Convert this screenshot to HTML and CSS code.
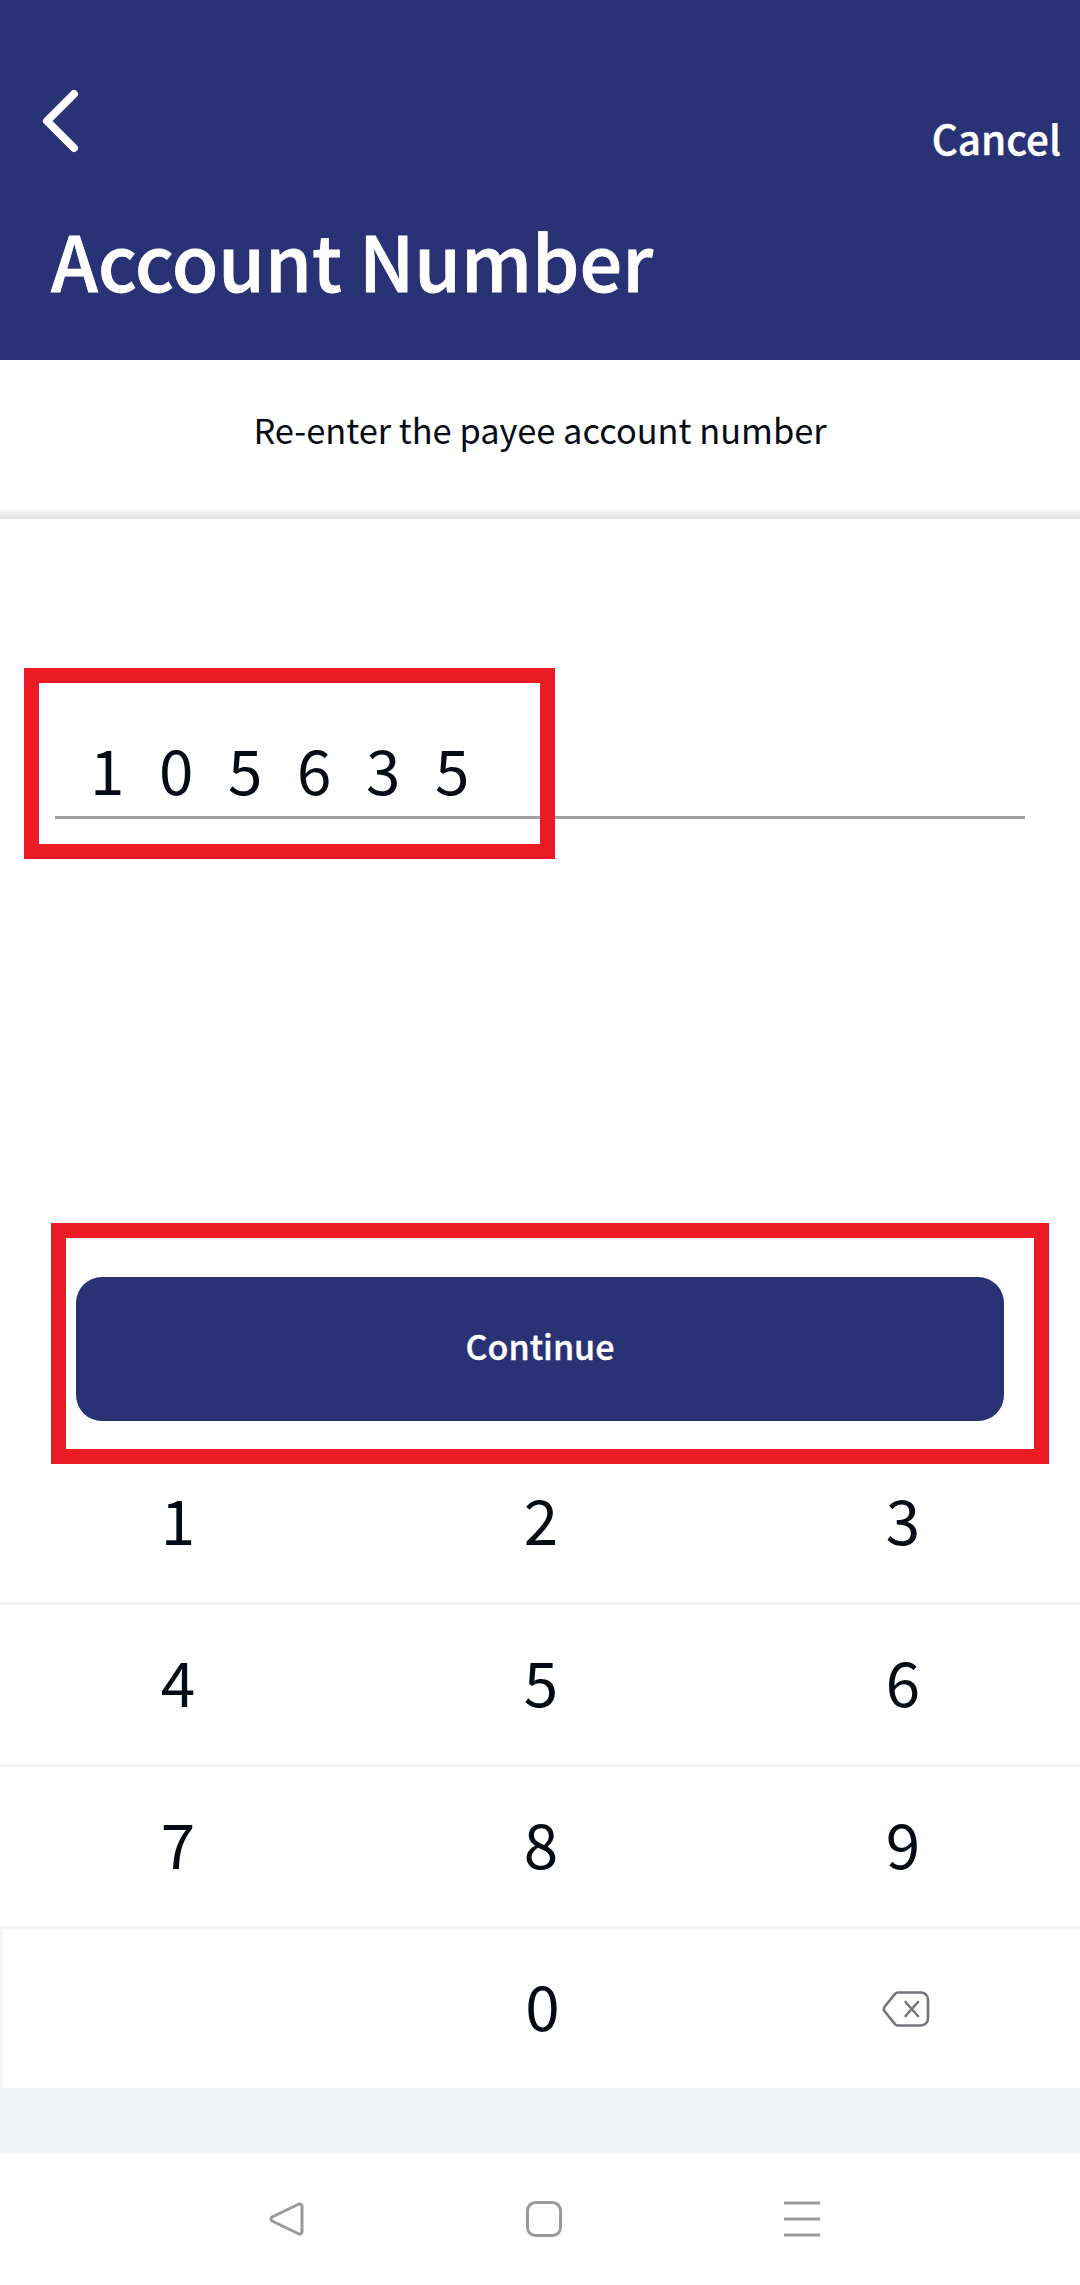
FILE: index.html
```html
<!DOCTYPE html>
<html lang="en">
<head>
    <meta charset="UTF-8">
    <meta name="viewport" content="width=device-width, initial-scale=1.0">
    <title>Account Number</title>
    <link rel="stylesheet" href="styles.css">
</head>

<body>
<div class="page">
    <header class="app-header">
        <div class="top-bar">
            <svg class="back-icon" width="40" height="64" viewBox="0 0 40 64">
                <path d="M32 4 L5 31 L32 58" fill="none" stroke="#fff" stroke-width="8" stroke-linecap="round" stroke-linejoin="round"/>
            </svg>
            <div class="cancel">Cancel</div>
        </div>
        <div class="title">Account Number</div>
    </header>

    <div class="prompt">Re-enter the payee account number</div>
    <div class="prompt-shadow"></div>

    <div class="field">
        <div class="field-value">105635</div>
        <div class="mark mark-field"></div>
    </div>

    <div class="action">
        <button class="continue" type="button">Continue</button>
        <div class="mark mark-action"></div>
    </div>

    <div class="keypad">
        <div class="key-row">
            <div class="key">1</div>
            <div class="key">2</div>
            <div class="key">3</div>
        </div>
        <div class="key-row">
            <div class="key">4</div>
            <div class="key">5</div>
            <div class="key">6</div>
        </div>
        <div class="key-row">
            <div class="key">7</div>
            <div class="key">8</div>
            <div class="key">9</div>
        </div>
        <div class="key-row key-row-last">
            <div class="key key-blank"></div>
            <div class="key key-zero">0</div>
            <div class="key">
                <svg class="backspace" width="48" height="38" viewBox="0 0 48 38">
                    <path d="M16 2.5 H39 A7 7 0 0 1 46 9.5 V28.5 A7 7 0 0 1 39 35.5 H16 A4 4 0 0 1 13.2 34.3 L2.8 21.5 A4 4 0 0 1 2.8 16.5 L13.2 3.7 A4 4 0 0 1 16 2.5 Z" fill="none" stroke="#73757e" stroke-width="2.6"/>
                    <path d="M23.5 12 L36 26 M36 12 L23.5 26" fill="none" stroke="#73757e" stroke-width="2.6" stroke-linecap="round"/>
                </svg>
            </div>
        </div>
    </div>

    <div class="keypad-foot"></div>

    <nav class="nav-bar">
        <svg width="36" height="36" viewBox="0 0 36 36">
            <path d="M31 3 A2.5 2.5 0 0 1 34 5 V31 A2.5 2.5 0 0 1 31 33 L4 20 A2.5 2.5 0 0 1 4 16 Z" fill="none" stroke="#999" stroke-width="3" stroke-linejoin="round"/>
        </svg>
        <svg width="36" height="36" viewBox="0 0 36 36">
            <rect x="1.5" y="1.5" width="33" height="33" rx="8" fill="none" stroke="#999" stroke-width="3"/>
        </svg>
        <svg width="36" height="36" viewBox="0 0 36 36">
            <path d="M0 2 H36 M0 18 H36 M0 34 H36" fill="none" stroke="#999" stroke-width="3"/>
        </svg>
    </nav>
</div>
</body>
</html>
```

FILE: styles.css
```css
* {
    box-sizing: border-box;
}

body {
    margin: 0;
    background-color: #fff;
    font-family: "Noto Sans CJK SC", "Noto Sans", sans-serif;
    color: #040b14;
}

.page {
    width: 1080px;
    height: 2285px;
    display: flex;
    flex-direction: column;
    overflow: hidden;
}

.app-header {
    height: 360px;
    background-color: #2a3276;
    color: #fff;
    padding: 90px 19px 0 42px;
}

.top-bar {
    display: flex;
    justify-content: space-between;
    height: 120px;
}

.back-icon {
    display: block;
}

.cancel {
    font-size: 40.4px;
    font-weight: 500;
    line-height: 56px;
    margin-top: 20px;
    -webkit-text-stroke: 0.4px #fff;
}

.title {
    font-size: 75.4px;
    font-weight: 500;
    line-height: 100px;
    margin-left: 9px;
    -webkit-text-stroke: 0.8px #fff;
}

.prompt {
    height: 147px;
    display: flex;
    align-items: center;
    justify-content: center;
    padding-bottom: 10px;
    font-size: 34.4px;
}

.prompt-shadow {
    height: 12px;
    background: linear-gradient(#fff, #e2e2e2);
}

.field {
    position: relative;
    height: 151px;
    margin: 149px 55px 0;
    border-bottom: 3px solid #a0a0a0;
}

.field-value {
    font-size: 62px;
    line-height: 90px;
    letter-spacing: 34.6px;
    padding: 55px 0 0 35px;
}

.mark {
    position: absolute;
    border: 15px solid #ed1c24;
    z-index: 1;
}

.mark-field {
    top: 0;
    left: -31px;
    width: 531px;
    height: 191px;
}

.action {
    position: relative;
    margin: 458px 76px 22px;
}

.mark-action {
    top: -54px;
    left: -25px;
    right: -45px;
    bottom: -43px;
}

.continue {
    display: block;
    width: 100%;
    height: 144px;
    border: 0;
    border-radius: 26px;
    padding: 0 0 8px;
    background-color: #2a3276;
    color: #fff;
    font-family: inherit;
    font-size: 34px;
    font-weight: 500;
    -webkit-text-stroke: 0.4px #fff;
}

.keypad {
    background-color: #f1f3f6;
}

.key-row {
    display: grid;
    grid-template-columns: 356px 370px 354px;
    margin-bottom: 3px;
}

.key-row-last {
    margin-bottom: 0;
}

.key {
    height: 159px;
    display: flex;
    align-items: center;
    justify-content: center;
    padding-bottom: 10px;
    background-color: #fff;
    font-size: 62px;
}

.key-blank {
    margin-left: 3px;
}

.key-zero {
    padding-left: 3px;
}

.backspace {
    margin: 10px 0 0 5px;
}

.keypad-foot {
    height: 65px;
    background-color: #f1f4f7;
}

.nav-bar {
    flex: 1;
    display: flex;
    align-items: center;
    gap: 222px;
    padding: 0 0 0 268px;
}
```
